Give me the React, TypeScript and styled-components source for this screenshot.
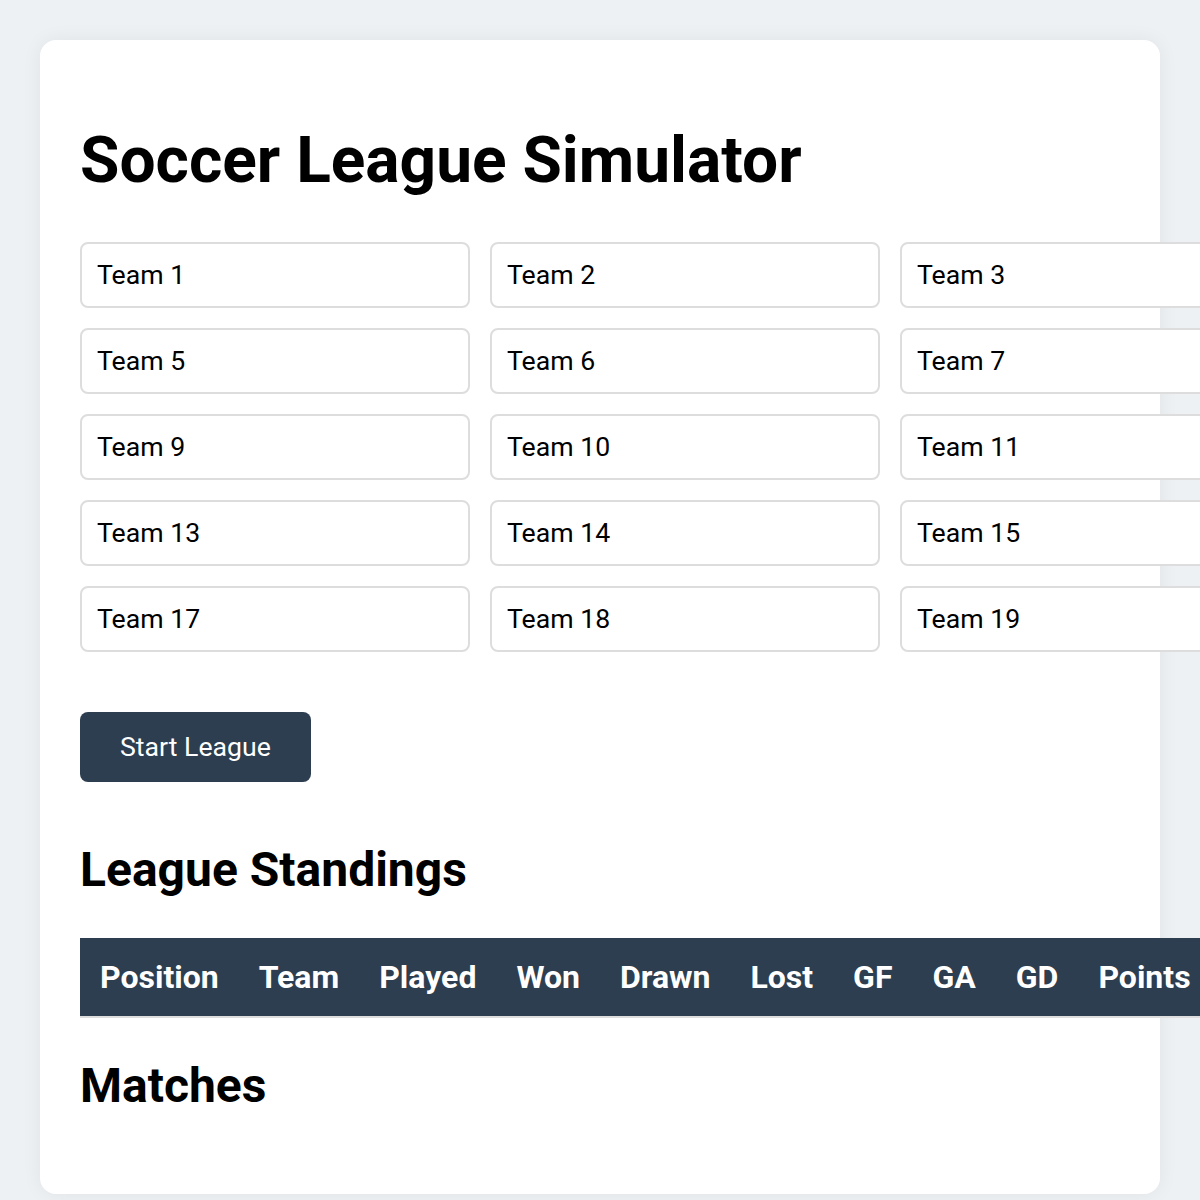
import React from "react";
import styled, { createGlobalStyle } from "styled-components";

const GlobalStyle = createGlobalStyle`
  html, body {
    margin: 0;
    padding: 0;
    background: #eef1f4;
    font-family: Roboto, "Liberation Sans", Arial, sans-serif;
    color: #000;
  }
`;

const Page = styled.div`
  padding: 40px;
`;

const Card = styled.div`
  background: #ffffff;
  border-radius: 16px;
  padding: 40px;
  box-shadow: 0 0 20px rgba(0, 0, 0, 0.06);
`;

const Title = styled.h1`
  font-size: 64px;
  font-weight: 700;
  margin: 43px 0 44px;
`;

const TeamGrid = styled.div`
  display: grid;
  grid-template-columns: repeat(4, 390px);
  gap: 20px;
  margin-bottom: 60px;
`;

const TeamInput = styled.input`
  box-sizing: border-box;
  height: 66px;
  padding: 0 15px;
  border: 2px solid #dddddd;
  border-radius: 8px;
  font-family: Roboto, "Liberation Sans", Arial, sans-serif;
  font-size: 26.67px;
  color: #000;
  background: #fff;
  outline: none;
`;

const PrimaryButton = styled.button`
  display: block;
  height: 70px;
  padding: 0 40px;
  margin-bottom: 60px;
  background: #2c3e50;
  color: #ffffff;
  border: none;
  border-radius: 8px;
  font-family: Roboto, "Liberation Sans", Arial, sans-serif;
  font-size: 26.67px;
  cursor: pointer;
`;

const SectionTitle = styled.h2`
  font-size: 48px;
  font-weight: 700;
  line-height: 56px;
  margin: 40px 0;
`;

const Table = styled.table`
  width: 100%;
  border-collapse: collapse;
`;

const HeadCell = styled.th`
  background: #2c3e50;
  color: #ffffff;
  font-size: 32px;
  line-height: 38px;
  font-weight: 700;
  text-align: left;
  padding: 20px;
  border-bottom: 2px solid #dddddd;
  white-space: nowrap;
`;

const teams = Array.from({ length: 20 }, (_, i) => `Team ${i + 1}`);
const columns = ["Position", "Team", "Played", "Won", "Drawn", "Lost", "GF", "GA", "GD", "Points"];

export default function App() {
  return (
    <>
      <GlobalStyle />
      <Page>
        <Card>
          <Title>Soccer League Simulator</Title>
          <TeamGrid>
            {teams.map((t) => (
              <TeamInput key={t} defaultValue={t} />
            ))}
          </TeamGrid>
          <PrimaryButton>Start League</PrimaryButton>
          <SectionTitle>League Standings</SectionTitle>
          <Table>
            <thead>
              <tr>
                {columns.map((c) => (
                  <HeadCell key={c}>{c}</HeadCell>
                ))}
              </tr>
            </thead>
            <tbody />
          </Table>
          <SectionTitle>Matches</SectionTitle>
        </Card>
      </Page>
    </>
  );
}
